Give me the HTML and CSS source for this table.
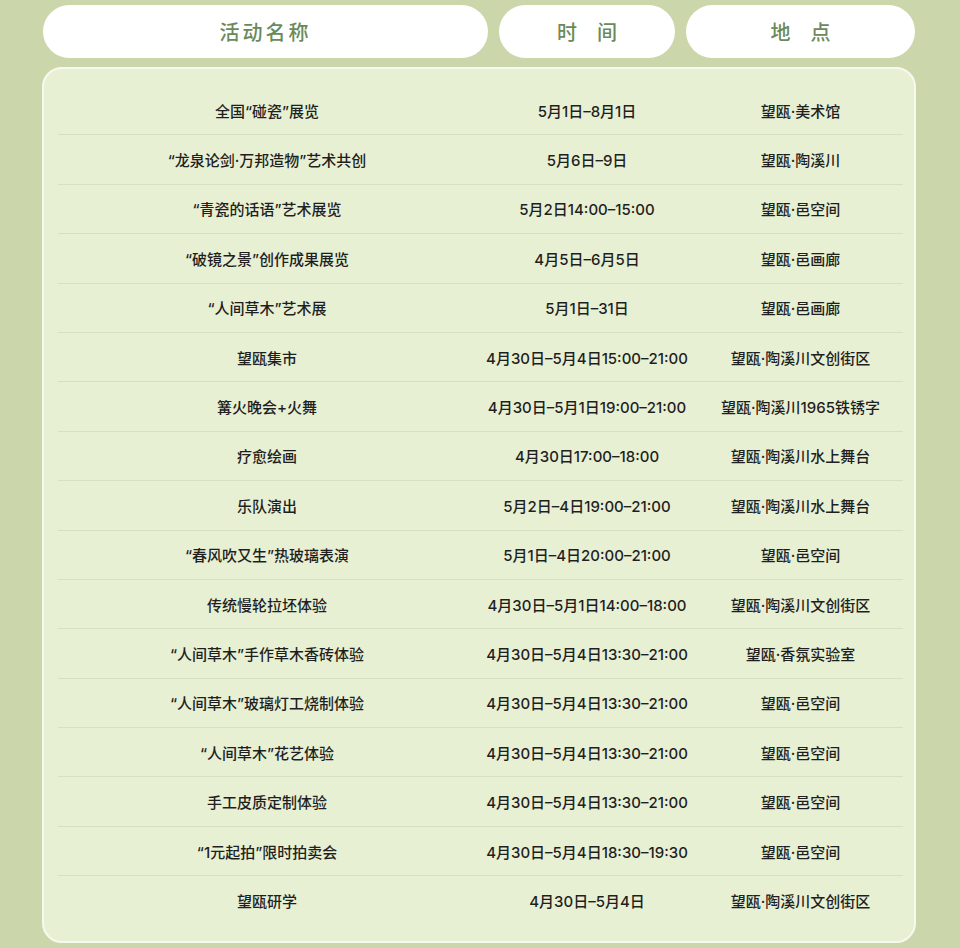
FILE: index.html
```html
<!DOCTYPE html>
<html lang="zh-CN">
<head>
<meta charset="utf-8">
<title>活动安排</title>
<link rel="stylesheet" href="styles.css">
</head>
<body>
<div class="page">
  <div class="head">
    <div class="pill pill-name">活动名称</div>
    <div class="pill pill-time">时　间</div>
    <div class="pill pill-place">地　点</div>
  </div>
  <div class="card">
    <div class="row"><div>全国“碰瓷”展览</div><div>5月1日–8月1日</div><div>望瓯·美术馆</div></div>
    <div class="row"><div>“龙泉论剑·万邦造物”艺术共创</div><div>5月6日–9日</div><div>望瓯·陶溪川</div></div>
    <div class="row"><div>“青瓷的话语”艺术展览</div><div>5月2日14:00–15:00</div><div>望瓯·邑空间</div></div>
    <div class="row"><div>“破镜之景”创作成果展览</div><div>4月5日–6月5日</div><div>望瓯·邑画廊</div></div>
    <div class="row"><div>“人间草木”艺术展</div><div>5月1日–31日</div><div>望瓯·邑画廊</div></div>
    <div class="row"><div>望瓯集市</div><div>4月30日–5月4日15:00–21:00</div><div>望瓯·陶溪川文创街区</div></div>
    <div class="row"><div>篝火晚会+火舞</div><div>4月30日–5月1日19:00–21:00</div><div>望瓯·陶溪川1965铁锈字</div></div>
    <div class="row"><div>疗愈绘画</div><div>4月30日17:00–18:00</div><div>望瓯·陶溪川水上舞台</div></div>
    <div class="row"><div>乐队演出</div><div>5月2日–4日19:00–21:00</div><div>望瓯·陶溪川水上舞台</div></div>
    <div class="row"><div>“春风吹又生”热玻璃表演</div><div>5月1日–4日20:00–21:00</div><div>望瓯·邑空间</div></div>
    <div class="row"><div>传统慢轮拉坯体验</div><div>4月30日–5月1日14:00–18:00</div><div>望瓯·陶溪川文创街区</div></div>
    <div class="row"><div>“人间草木”手作草木香砖体验</div><div>4月30日–5月4日13:30–21:00</div><div>望瓯·香氛实验室</div></div>
    <div class="row"><div>“人间草木”玻璃灯工烧制体验</div><div>4月30日–5月4日13:30–21:00</div><div>望瓯·邑空间</div></div>
    <div class="row"><div>“人间草木”花艺体验</div><div>4月30日–5月4日13:30–21:00</div><div>望瓯·邑空间</div></div>
    <div class="row"><div>手工皮质定制体验</div><div>4月30日–5月4日13:30–21:00</div><div>望瓯·邑空间</div></div>
    <div class="row"><div>“1元起拍”限时拍卖会</div><div>4月30日–5月4日18:30–19:30</div><div>望瓯·邑空间</div></div>
    <div class="row last"><div>望瓯研学</div><div>4月30日–5月4日</div><div>望瓯·陶溪川文创街区</div></div>
  </div>
</div>
</body>
</html>
```

FILE: styles.css
```css
html, body {
  margin: 0;
  padding: 0;
}
body {
  background: #cbd7aa;
  font-family: "Noto Sans CJK SC", "Noto Sans", sans-serif;
  width: 960px;
  height: 948px;
  overflow: hidden;
}
.page {
  padding: 5px 0 0 42px;
}
.head {
  display: flex;
  gap: 11px;
  padding-left: 1px;
}
.pill {
  background: #ffffff;
  height: 53px;
  border-radius: 27px;
  display: flex;
  align-items: center;
  justify-content: center;
  color: #6b8a57;
  font-size: 20px;
  font-weight: 500;
}
.pill-name {
  width: 445px;
  letter-spacing: 3px;
}
.pill-time {
  width: 176px;
}
.pill-place {
  width: 229px;
}
.card {
  margin-top: 9px;
  width: 874px;
  box-sizing: border-box;
  height: 876px;
  background: #e8f0d4;
  border: 2px solid #f6f9ee;
  border-radius: 20px;
  padding: 17px 11px 0 14px;
}
.row {
  display: grid;
  grid-template-columns: 418px 222px 205px;
  height: 49.4px;
  box-sizing: border-box;
  border-bottom: 1.5px solid #d6e0bf;
  align-items: center;
  text-align: center;
  font-family: Inter, "Noto Sans CJK SC", sans-serif;
  font-size: 15px;
  font-weight: 500;
  color: #1f1f1f;
}
.row.last {
  border-bottom: none;
}
```
